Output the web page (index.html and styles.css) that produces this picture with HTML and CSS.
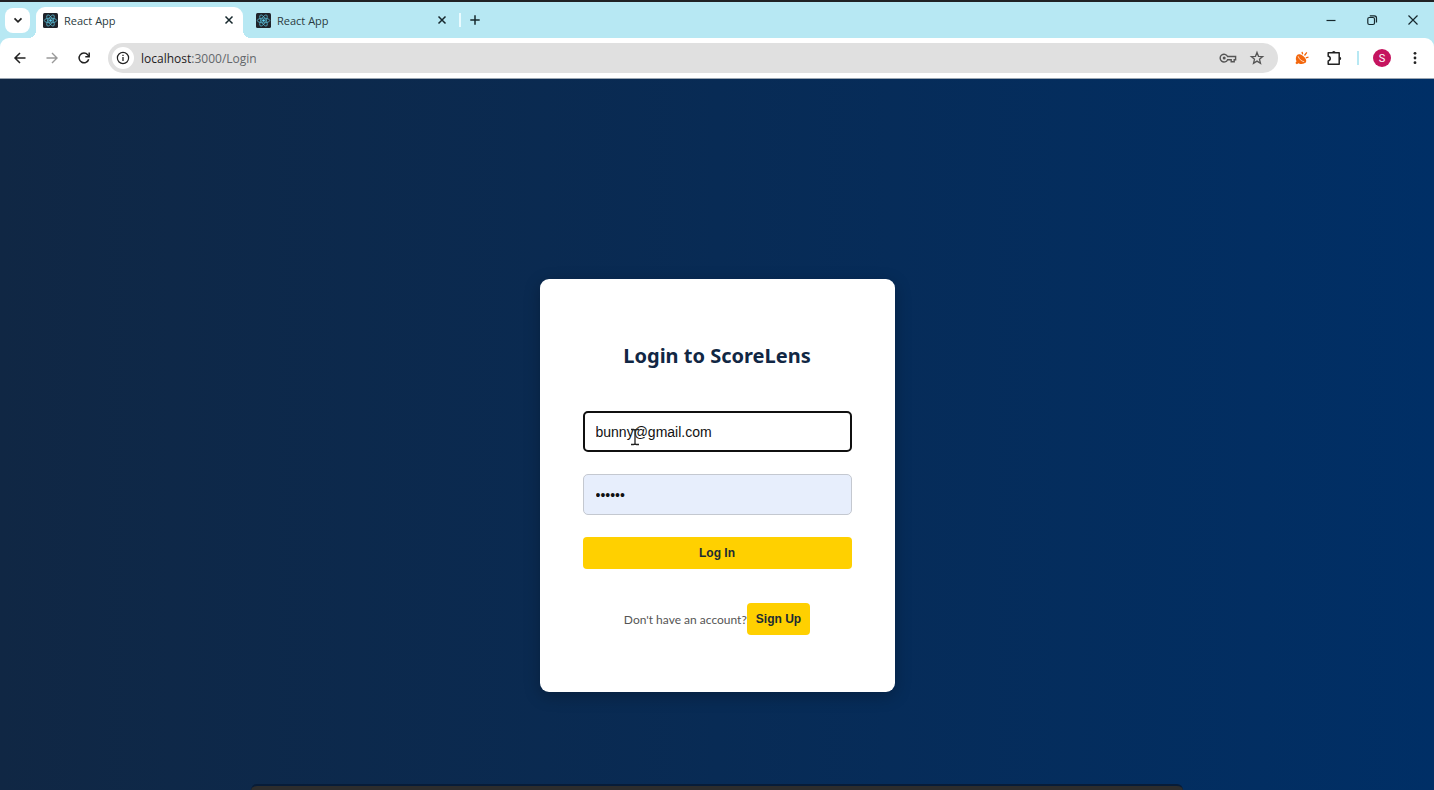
FILE: index.html
```html
<!DOCTYPE html>
<html lang="en">
<head>
<meta charset="utf-8">
<meta name="viewport" content="width=device-width, initial-scale=1">
<title>React App</title>
<link rel="stylesheet" href="styles.css">
</head>
<body>
<svg class="defs" aria-hidden="true">
  <symbol id="react" viewBox="0 0 30 30">
    <rect width="30" height="30" rx="3" fill="#20232a"/>
    <g fill="none" stroke="#58b9d3" stroke-width="1.5">
      <ellipse cx="15" cy="15" rx="12.500" ry="4.800"/>
      <ellipse cx="15" cy="15" rx="12.500" ry="4.800" transform="rotate(60 15 15)"/>
      <ellipse cx="15" cy="15" rx="12.500" ry="4.800" transform="rotate(120 15 15)"/>
    </g>
    <circle cx="15" cy="15" r="2.500" fill="#61dafb"/>
  </symbol>
  <symbol id="close" viewBox="0 0 16 16"><path d="M4.500 4.500l7 7m0-7l-7 7" fill="none" stroke="#17282d" stroke-width="1.5"/></symbol>
</svg>
<header class="browser">
  <div class="tabs">
    <button class="search-tabs" aria-label="Search tabs"><svg viewBox="0 0 16 16"><path d="M4.500 6.300L8 9.800l3.500-3.500" fill="none" stroke="#222" stroke-width="1.7"/></svg></button>
    <div class="tab active"><svg class="favicon"><use href="#react"/></svg><span class="tab-title">React App</span><button class="icon-button" aria-label="Close tab"><svg><use href="#close"/></svg></button></div>
    <div class="tab"><svg class="favicon"><use href="#react"/></svg><span class="tab-title">React App</span><button class="icon-button" aria-label="Close tab"><svg><use href="#close"/></svg></button></div>
    <span class="tab-divider"></span>
    <button class="icon-button" aria-label="New tab"><svg viewBox="0 0 16 16"><path d="M8 3.300v9.400M3.300 8h9.400" fill="none" stroke="#17282d" stroke-width="1.5"/></svg></button>
    <div class="window-controls">
      <button class="icon-button" aria-label="Minimize"><svg viewBox="0 0 16 16"><path d="M3.500 8.500h9" stroke="#17282d" stroke-width="1.200"/></svg></button>
      <button class="icon-button" aria-label="Restore"><svg viewBox="0 0 16 16"><g fill="none" stroke="#17282d" stroke-width="1.200"><rect x="3.800" y="5.500" width="6.700" height="7" rx="1.500"/><path d="M5.800 3.900h4.500a2.200 2.200 0 0 1 2.200 2.200v4.500"/></g></svg></button>
      <button class="icon-button" aria-label="Close window"><svg viewBox="0 0 16 16"><path d="M3.500 3.500l9 9m0-9l-9 9" stroke="#17282d" stroke-width="1.200"/></svg></button>
    </div>
  </div>
  <div class="toolbar">
    <div class="nav">
      <button class="icon-button" aria-label="Back"><svg viewBox="0 0 16 16"><path d="M13.500 8H3m5-5L3 8l5 5" fill="none" stroke="#222" stroke-width="1.500"/></svg></button>
      <button class="icon-button" aria-label="Forward"><svg viewBox="0 0 16 16"><path d="M2.500 8H13M8 3l5 5-5 5" fill="none" stroke="#999" stroke-width="1.400"/></svg></button>
      <button class="icon-button" aria-label="Reload"><svg viewBox="0 0 16 16"><path d="M12.700 9.200a4.900 4.900 0 1 1-1-4.500L12.900 6" fill="none" stroke="#222" stroke-width="1.500"/><path d="M13.200 2.500v4.200H9.300" fill="none" stroke="#222" stroke-width="1.500"/></svg></button>
    </div>
    <div class="address">
      <button class="site-info" aria-label="Site information"><svg viewBox="0 0 16 16"><circle cx="8" cy="8" r="5.600" fill="none" stroke="#222" stroke-width="1.200"/><path d="M8 7v4M8 4.700v1.400" stroke="#222" stroke-width="1.300"/></svg></button>
      <a class="url" href="#"><span class="host">localhost</span>:3000/Login</a>
      <button class="icon-button wide" aria-label="Passwords"><svg viewBox="0 0 18 16"><g fill="none" stroke="#555" stroke-width="1.400"><path d="M8.600 6.500A3.900 3.900 0 1 0 8.600 9.700H12.200v2h3V9.700h1.400V6.500z"/></g><circle cx="5.200" cy="8.100" r="1.500" fill="#555"/></svg></button>
      <button class="icon-button" aria-label="Bookmark"><svg viewBox="0 0 16 16"><path d="M8 2.400l1.500 3.900 4.200.3-3.200 2.700 1 4L8 11.100l-3.500 2.200 1-4L2.300 6.600l4.200-.3z" fill="none" stroke="#555" stroke-width="1.300"/></svg></button>
    </div>
    <div class="extensions">
      <button class="icon-button" aria-label="Extension"><svg viewBox="0 0 16 16"><path d="M3.300 4.700C1.600 6.800 1.400 9.200 2.500 11.200L1.400 13l1.400 1.300 1.700-1.100c2.600 1.500 5.600 1 7.600-1.100z" fill="#f3670d"/><ellipse cx="7.700" cy="8.400" rx="5.600" ry="2.700" transform="rotate(41 7.700 8.400)" fill="#f3670d"/><path d="M4.200 6.300c.7 2.600 3 4.900 6 5.400" fill="none" stroke="#fff" stroke-width=".700"/><path d="M8.700 4.200L8 1.900M10.500 5.500l2.300-3.100M11.800 7.800l2.700-.6" fill="none" stroke="#f3670d" stroke-width="1.300"/></svg></button>
      <button class="icon-button" aria-label="Extensions"><svg viewBox="0 0 16 16"><path d="M2.200 2.800h11v11.400h-11v-3.300c2.700-.4 2.700-4.200 0-4.600z" fill="none" stroke="#222" stroke-width="1.500" stroke-linejoin="round"/><path d="M6 2.700a1.800 1.800 0 0 1 3.600 0zM13.400 6.700a1.800 1.800 0 0 1 0 3.600z" fill="#222"/></svg></button>
      <span class="toolbar-divider"></span>
      <button class="avatar" aria-label="Profile">S</button>
      <button class="icon-button" aria-label="Menu"><svg viewBox="0 0 16 16"><g fill="#222"><circle cx="8" cy="3.300" r="1.400"/><circle cx="8" cy="8" r="1.400"/><circle cx="8" cy="12.700" r="1.400"/></g></svg></button>
    </div>
  </div>
</header>
<main class="page">
  <section class="card">
    <h1>Login to ScoreLens</h1>
    <form class="login-form">
      <div class="field">
        <input class="email" type="email" aria-label="Email" value="bunny@gmail.com">
        <svg class="text-cursor" viewBox="0 0 10 18" aria-hidden="true"><path d="M1 1.500h2.500q1.500 0 1.500 1.200v12.600q0 1.200-1.500 1.200H1m8-15H6.500Q5 1.500 5 2.700m0 12.600q0 1.200 1.500 1.200H9" fill="none" stroke="#222" stroke-width="1.300"/></svg>
      </div>
      <input class="password" type="password" aria-label="Password" value="bunny1">
      <button class="primary" type="button">Log In</button>
    </form>
    <div class="signup"><span>Don't have an account?</span><button class="primary" type="button">Sign Up</button></div>
  </section>
</main>
<div class="dock"></div>
</body>
</html>
```
FILE: styles.css
```css
* { box-sizing: border-box; }
body {
  margin: 0;
  min-height: 100vh;
  display: flex;
  flex-direction: column;
  position: relative;
  overflow: hidden;
  font-family: "Open Sans", "Noto Sans", sans-serif;
}
button { border: 0; padding: 0; background: none; font: inherit; color: inherit; }
svg { display: block; }
.defs { position: absolute; width: 0; height: 0; }

.browser { border-top: 2px solid #202124; background: #b7e8f3; }
.tabs { display: flex; align-items: center; height: 36px; padding: 0 13px 0 5px; }
.search-tabs { width: 25px; height: 25px; border-radius: 8px; background: #fff; display: grid; place-items: center; margin-right: 6px; }
.search-tabs svg, .icon-button svg { width: 16px; height: 16px; }
.icon-button { width: 16px; height: 16px; flex: none; }
.icon-button.wide, .icon-button.wide svg { width: 18px; }
.tab {
  position: relative;
  width: 207px;
  height: 31px;
  align-self: flex-end;
  display: flex;
  align-items: center;
  gap: 6px;
  padding: 0 6px 5px 7px;
  font-size: 11px;
  color: #2b3b40;
}
.tab + .tab { width: 213px; padding-left: 13px; }
.active { background: #fff; border-radius: 9px 9px 0 0; }
.active::before, .active::after {
  content: "";
  position: absolute;
  bottom: 0;
  width: 8px;
  height: 8px;
}
.active::before { right: 100%; background: radial-gradient(circle at 0 0, transparent 8px, #fff 8px); }
.active::after { left: 100%; background: radial-gradient(circle at 100% 0, transparent 8px, #fff 8px); }
.favicon { width: 15px; height: 15px; flex: none; }
.tab-title { flex: 1; }
.tab-divider { width: 2px; height: 14px; background: #e9fbff; margin: 0 6px 0 3px; }
.window-controls { display: flex; gap: 25px; margin-left: auto; }

.toolbar {
  display: flex;
  align-items: center;
  gap: 16px;
  height: 41px;
  padding: 0 11px 0 12px;
  background: #fff;
  border-bottom: 1px solid #9aa5b1;
  border-radius: 9px 9px 0 0;
}
.nav { display: flex; gap: 16px; }
.address {
  flex: 1;
  display: flex;
  align-items: center;
  gap: 12px;
  height: 30px;
  padding: 0 13px 0 4px;
  border-radius: 15px;
  background: #e0e0e0;
}
.site-info { width: 22px; height: 22px; border-radius: 50%; background: #fff; display: grid; place-items: center; }
.site-info svg { width: 16px; height: 16px; }
.url { flex: 1; margin-left: -5px; font-size: 12px; color: #63676b; text-decoration: none; }
.host { color: #1f2023; }
.extensions { display: flex; align-items: center; gap: 16px; }
.toolbar-divider { width: 2px; height: 14px; background: #b7e8f3; margin: 0 -2px 0 -1px; }
.avatar { width: 18px; height: 18px; border-radius: 50%; background: #c5145f; color: #fff; font: 11px Roboto, sans-serif; }

.page {
  flex: 1;
  display: flex;
  justify-content: center;
  align-items: flex-start;
  padding: 200px 20px 98px;
  background: linear-gradient(to right, #102744, #002f66);
}
.card {
  width: 100%;
  max-width: 355px;
  padding: 62px 43px 57px;
  border-radius: 9px;
  background: #fff;
  box-shadow: 0 4px 16px rgba(0, 0, 0, .25);
  text-align: center;
}
h1 { margin: 0 0 40px; font: bold 20px/30px "Noto Sans", "Open Sans", sans-serif; color: #112744; }
.login-form { display: flex; flex-direction: column; gap: 22px; }
.field { position: relative; }
input {
  display: block;
  width: 100%;
  height: 41px;
  padding: 0 12px;
  border: 1px solid #c4c8d0;
  border-radius: 5px;
  font: 14px "Liberation Sans", Arial, sans-serif;
  color: #111;
}
.email { border: 2px solid #101010; padding: 0 11px; background: #fff; }
.password { background: #e7eefc; }
.text-cursor { position: absolute; left: 47px; top: 17px; width: 10px; height: 18px; }
.primary {
  height: 32px;
  padding: 0 9px;
  border-radius: 4px;
  background: #ffd000;
  color: #1c2b33;
  font: bold 12px "Liberation Sans", Arial, sans-serif;
}
.signup { display: flex; align-items: center; justify-content: center; margin-top: 34px; font: 12px Lato, sans-serif; color: #555; }
.dock {
  position: absolute;
  bottom: 0;
  left: 0;
  right: 0;
  width: 65%;
  height: 6px;
  margin: 0 auto;
  border-top: 2px solid #071c38;
  border-radius: 8px 8px 0 0;
  background: #2d2d2d;
}
```
